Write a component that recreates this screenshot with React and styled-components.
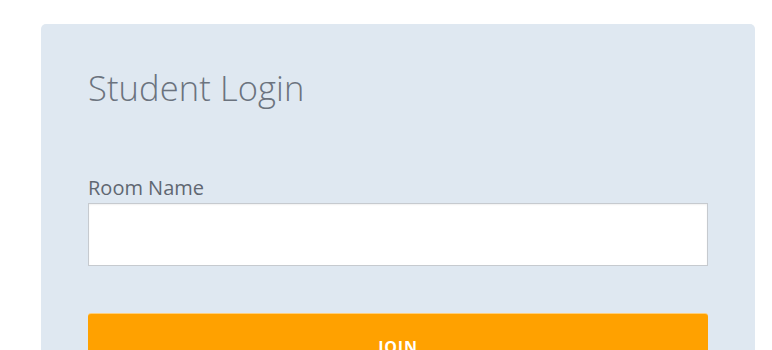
import React from "react";
import styled, { createGlobalStyle } from "styled-components";

const Global = createGlobalStyle`
  html, body { margin: 0; padding: 0; background: #ffffff; }
  body { font-family: "Open Sans", "Liberation Sans", sans-serif; }
  * { box-sizing: border-box; }
`;

const Page = styled.div`
  padding: 24px 0 0 41px;
`;

const Card = styled.form`
  width: 714px;
  min-height: 360px;
  background: #dfe8f1;
  border-radius: 5px;
  padding: 41px 47px 40px 47px;
  display: flex;
  flex-direction: column;
`;

const Title = styled.h1`
  margin: 0;
  font-family: "Open Sans", sans-serif;
  font-weight: 300;
  font-size: 34.5px;
  line-height: 46px;
  color: #6b737e;
  letter-spacing: 0.1px;
`;

const Label = styled.label`
  margin-top: 63px;
  font-size: 20px;
  line-height: 27px;
  color: #5f6771;
`;

const Input = styled.input`
  margin-top: 2px;
  height: 63px;
  width: 100%;
  background: #ffffff;
  border: 1.5px solid #c6cacf;
  box-shadow: inset 0 1px 2px rgba(0, 0, 0, 0.06);
  outline: none;
  padding: 0 14px;
  font-size: 18px;
  font-family: inherit;
`;

const Button = styled.button`
  margin-top: 48px;
  height: 66px;
  width: 100%;
  background: #ffa100;
  border: none;
  border-radius: 3px;
  color: #ffffff;
  font-family: "Open Sans", sans-serif;
  font-weight: 700;
  font-size: 16px;
  letter-spacing: 0.8px;
  text-transform: uppercase;
  cursor: pointer;
  box-shadow: 0 -1px 0 #ffcf7a;
`;

export default function App() {
  return (
    <>
      <Global />
      <Page>
        <Card onSubmit={(e) => e.preventDefault()}>
          <Title>Student Login</Title>
          <Label htmlFor="room">Room Name</Label>
          <Input id="room" type="text" />
          <Button type="submit">Join</Button>
        </Card>
      </Page>
    </>
  );
}
